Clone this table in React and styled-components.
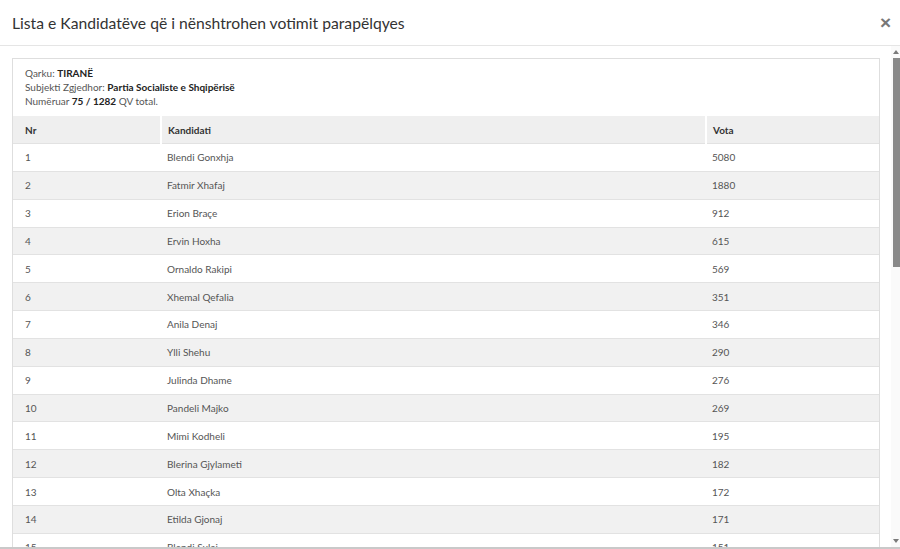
import React from "react";
import styled, { createGlobalStyle } from "styled-components";

const candidates = [
  ["Blendi Gonxhja", 5080],
  ["Fatmir Xhafaj", 1880],
  ["Erion Braçe", 912],
  ["Ervin Hoxha", 615],
  ["Ornaldo Rakipi", 569],
  ["Xhemal Qefalia", 351],
  ["Anila Denaj", 346],
  ["Ylli Shehu", 290],
  ["Julinda Dhame", 276],
  ["Pandeli Majko", 269],
  ["Mimi Kodheli", 195],
  ["Blerina Gjylameti", 182],
  ["Olta Xhaçka", 172],
  ["Etilda Gjonaj", 171],
  ["Blendi Sulaj", 151],
  ["Arben Ahmetaj", 148],
  ["Klodiana Spahiu", 140],
  ["Taulant Balla", 133],
  ["Elisa Spiropali", 127],
  ["Erjon Malaj", 119],
];

const Modal = () => {
  return (
    <Dialog>
      <Header>
        <Title>Lista e Kandidatëve që i nënshtrohen votimit parapëlqyes</Title>
        <Close>×</Close>
      </Header>
      <BodyRow>
        <Body>
          <Panel>
            <Info>
              <div>
                Qarku: <b>TIRANË</b>
              </div>
              <div>
                Subjekti Zgjedhor: <b>Partia Socialiste e Shqipërisë</b>
              </div>
              <div>
                Numëruar <b>75 / 1282</b> QV total.
              </div>
            </Info>
            <Table>
              <colgroup>
                <col style={{ width: 148 }} />
                <col style={{ width: 545 }} />
                <col />
              </colgroup>
              <thead>
                <tr>
                  <Th>Nr</Th>
                  <Th>Kandidati</Th>
                  <Th>Vota</Th>
                </tr>
              </thead>
              <tbody>
                {candidates.map(([name, votes], i) => (
                  <Row key={name} $even={i % 2 === 1}>
                    <Td>{i + 1}</Td>
                    <Td>{name}</Td>
                    <Td>{votes}</Td>
                  </Row>
                ))}
              </tbody>
            </Table>
          </Panel>
        </Body>
        <ScrollBar>
          <Arrow $dir="up" />
          <Thumb />
          <Track />
          <Arrow $dir="down" />
        </ScrollBar>
      </BodyRow>
    </Dialog>
  );
};

// styled components
const GlobalStyle = createGlobalStyle`
  html, body {
    margin: 0;
    padding: 0;
    height: 100%;
    background: #fff;
  }
  body {
    font-family: Lato, "Open Sans", sans-serif;
    color: #555;
    overflow: hidden;
  }
`;

const Dialog = styled.div`
  height: 549px;
  box-sizing: border-box;
  display: flex;
  flex-direction: column;
  border-bottom: 2px solid #c9c9c9;
`;

const Header = styled.div`
  height: 46px;
  flex-shrink: 0;
  box-sizing: border-box;
  display: flex;
  align-items: center;
  justify-content: space-between;
  padding: 0 9px 0 12px;
  border-bottom: 1px solid #e5e5e5;
`;

const Title = styled.h4`
  margin: 0;
  font-size: 15.7px;
  font-weight: 400;
  color: #333;
`;

const Close = styled.span`
  font-family: "Liberation Sans", Arial, sans-serif;
  font-size: 19px;
  font-weight: 700;
  color: #777;
  line-height: 1;
  cursor: pointer;
`;

const BodyRow = styled.div`
  flex: 1;
  min-height: 0;
  display: flex;
`;

const Body = styled.div`
  flex: 1;
  overflow: hidden;
  padding: 12px 11px 0 12px;
`;

const ScrollBar = styled.div`
  width: 9px;
  flex-shrink: 0;
  display: flex;
  flex-direction: column;
  background: #fafafa;
`;

const Arrow = styled.div`
  height: 12px;
  display: flex;
  align-items: center;
  justify-content: flex-end;
  padding-right: 1px;

  &::before {
    content: "";
    border-left: 3px solid transparent;
    border-right: 3px solid transparent;
    ${(p) =>
      p.$dir === "up"
        ? "border-bottom: 4px solid #7a7a7a;"
        : "border-top: 4px solid #7a7a7a;"}
  }
`;

const Thumb = styled.div`
  height: 209px;
  margin-left: 2px;
  background: #898989;
`;

const Track = styled.div`
  flex: 1;
`;

const Panel = styled.div`
  border: 1px solid #dedede;
`;

const Info = styled.div`
  padding: 7px 12px 8px;
  font-size: 10px;
  line-height: 14px;
  color: #555;

  b {
    color: #222;
    font-weight: 700;
  }
`;

const Table = styled.table`
  width: 100%;
  table-layout: fixed;
  border-collapse: collapse;
  font-size: 10px;
`;

const Th = styled.th`
  height: 27px;
  padding: 0 6px;
  text-align: left;
  font-weight: 700;
  color: #333;
  background: #efefef;
  border-right: 2px solid #fff;

  &:first-child {
    padding-left: 12px;
  }
  &:last-child {
    border-right: none;
  }
`;

const Row = styled.tr`
  background: ${(p) => (p.$even ? "#f1f1f1" : "#fff")};
  border-top: 1px solid #e2e2e2;
`;

const Td = styled.td`
  height: 26.85px;
  padding: 0 6px;
  color: #555;

  &:first-child {
    padding-left: 12px;
  }
`;

const App = () => (
  <>
    <GlobalStyle />
    <Modal />
  </>
);

export default App;
